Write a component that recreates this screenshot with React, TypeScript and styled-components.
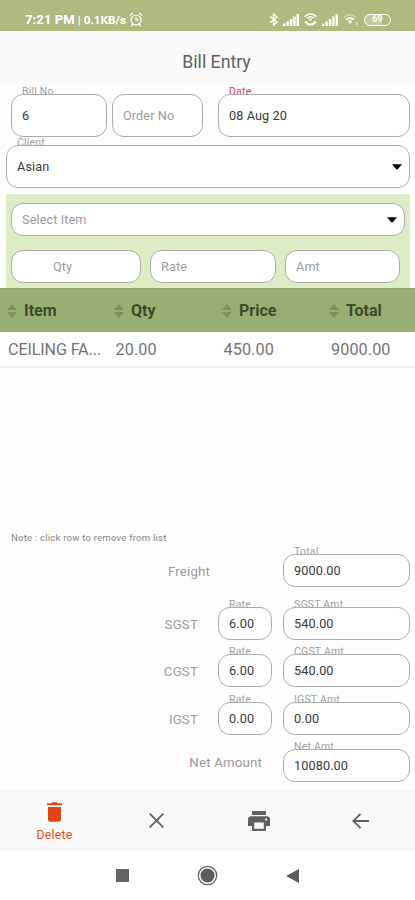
import React from "react";
import styled, { createGlobalStyle } from "styled-components";

const GlobalStyle = createGlobalStyle`
  * { box-sizing: border-box; }
  body { margin: 0; background: #fdfdfd; font-family: Roboto, "Liberation Sans", sans-serif; }
`;

const Screen = styled.main`
  width: 415px;
  height: 900px;
  display: flex;
  flex-direction: column;
  overflow: hidden;
  background: #fdfdfd;
`;

const StatusBar = styled.header`
  height: 31px;
  flex: none;
  display: flex;
  align-items: flex-end;
  justify-content: space-between;
  padding: 0 24px 3px 25px;
  background: #b0b97f;
  color: #fff;
`;

const StatusGroup = styled.div<{ $gap: number }>`
  display: flex;
  align-items: center;
  gap: ${(p) => p.$gap}px;
  height: 17px;
`;

const Clock = styled.span`
  font-size: 13px;
  font-weight: 700;
  letter-spacing: 0.1px;
  white-space: pre;
`;

const NetSpeed = styled.span`
  font-size: 11.8px;
  font-weight: 700;
  white-space: pre;
`;

const TitleBar = styled.div`
  height: 54px;
  flex: none;
  display: flex;
  align-items: center;
  justify-content: center;
  padding: 7px 0 0 18px;
  background: #fafafa;
  color: #606060;
  font-size: 17.7px;
`;

const FieldRow = styled.div<{ $top: number; $left: number }>`
  display: flex;
  flex: none;
  margin-top: ${(p) => p.$top}px;
  padding-left: ${(p) => p.$left}px;
`;

const FieldWrap = styled.div<{ $w: number; $h: number; $ml?: number }>`
  position: relative;
  z-index: 0;
  flex: none;
  width: ${(p) => p.$w}px;
  height: ${(p) => p.$h}px;
  margin-left: ${(p) => p.$ml ?? 0}px;
`;

const FloatLabel = styled.span<{ $accent?: boolean }>`
  position: absolute;
  z-index: -1;
  left: 11px;
  top: -9.5px;
  font-size: 10.5px;
  line-height: 13px;
  letter-spacing: 0.2px;
  white-space: nowrap;
  color: ${(p) => (p.$accent ? "#df3566" : "#a0a0a0")};
`;

const FieldBox = styled.div<{ $hint?: boolean; $pl: number }>`
  display: flex;
  align-items: center;
  justify-content: space-between;
  height: 100%;
  padding: 0 7px 0 ${(p) => p.$pl}px;
  border: 1px solid #acacac;
  border-radius: 12px;
  background: #fff;
  font-size: 12.7px;
  letter-spacing: 0.1px;
  white-space: nowrap;
  color: ${(p) => (p.$hint ? "#9b9b9b" : "#383838")};
`;

const ItemPanel = styled.section`
  width: 404px;
  height: 94px;
  flex: none;
  margin: 6px 0 0 6px;
  overflow: hidden;
  background: #ddecc5;
`;

const TableHead = styled.div`
  height: 44px;
  flex: none;
  display: grid;
  grid-template-columns: 107px 108px 107px 93px;
  align-items: center;
  padding: 0 0 0 7px;
  background: #99ae73;
  border-top: 1px solid #91a66b;
`;

const HeadCell = styled.div`
  display: flex;
  align-items: center;
  gap: 7px;
  font-size: 16px;
  font-weight: 700;
  color: #3d4a2c;
`;

const TableRow = styled.div`
  height: 36px;
  flex: none;
  display: grid;
  grid-template-columns: 107.5px 108px 107.5px 85px;
  align-items: center;
  padding-left: 8px;
  background: #fff;
  border-bottom: 2px solid #ececec;
  font-size: 16.2px;
  color: #747474;
`;

const Cell = styled.span<{ $tight?: boolean }>`
  letter-spacing: ${(p) => (p.$tight ? "-0.15px" : "0.1px")};
  white-space: nowrap;
`;

const Note = styled.p`
  flex: none;
  margin: 163px 0 0 11px;
  height: 14px;
  font-size: 9.6px;
  line-height: 14px;
  letter-spacing: 0.2px;
  color: #858585;
`;

const TotalRow = styled.div<{ $gap: number }>`
  display: flex;
  flex: none;
  align-items: center;
  justify-content: flex-end;
  height: 33px;
  margin-top: ${(p) => p.$gap}px;
  padding-right: 5px;
`;

const TotalName = styled.span<{ $mr: number; $raised?: boolean }>`
  margin-right: ${(p) => p.$mr}px;
  padding: ${(p) => (p.$raised ? "0 0 6px" : "2px 0 0")};
  font-size: 13.3px;
  letter-spacing: 0.15px;
  color: #9b9b9b;
`;

const Toolbar = styled.nav`
  height: 61px;
  flex: none;
  margin-top: 8px;
  display: grid;
  grid-template-columns: 109px 95px 109px 94px;
  align-items: center;
  background: #f8f8f8;
  color: #606060;
`;

const Tool = styled.div<{ $active?: boolean }>`
  display: flex;
  flex-direction: column;
  align-items: center;
  gap: 6px;
  padding-top: ${(p) => (p.$active ? 3 : 0)}px;
  font-size: 12.2px;
  line-height: 14px;
  letter-spacing: 0.3px;
  color: ${(p) => (p.$active ? "#e54d1b" : "#606060")};
`;

const SystemNav = styled.nav`
  height: 49px;
  flex: none;
  display: flex;
  align-items: center;
  justify-content: center;
  gap: 68px;
  background: #fff;
`;

const Svg = styled.svg`
  display: block;
  flex: none;
`;

const Alarm = () => (
  <Svg width="14" height="15" viewBox="0 0 14 15" fill="none" stroke="#fff" strokeWidth="1.2" strokeLinecap="round">
    <circle cx="7" cy="8" r="5" />
    <path d="M7 5.5V8.2H9M1 3.2 3.6 1.2M13 3.2 10.4 1.2M3.6 12.2 2.5 13.6M10.4 12.2l1.1 1.4" />
  </Svg>
);

const Bluetooth = () => (
  <Svg width="9" height="13" viewBox="0 0 9 13" fill="none" stroke="#fff" strokeWidth="1.3">
    <path d="M1 3.5 8 9 4.5 12V1L8 4 1 9.5" />
  </Svg>
);

const Signal = () => (
  <Svg width="16" height="12" viewBox="0 0 16 12" fill="#fff">
    <path d="M0 9.5h2.4V12H0zM3.4 7.5h2.4V12H3.4zM6.8 5h2.4v7H6.8zM10.2 2.5h2.4V12h-2.4zM13.6 0H16v12h-2.4z" />
  </Svg>
);

const WifiCall = () => (
  <Svg width="13" height="13" viewBox="0 0 13 13" fill="none" stroke="#fff" strokeWidth="1.4">
    <path d="M.7 3.6Q6.5-1.5 12.3 3.6M2.8 5.3Q6.5 2.2 10.2 5.3" />
    <path d="M4.5 6.1Q6.5 4.7 8.5 6.1L6.5 8z" fill="#fff" stroke="none" />
    <path d="M1.3 8.5Q6.5 14.8 11.7 8.5" strokeWidth="2" />
  </Svg>
);

const Wifi = () => (
  <Svg width="16" height="13" viewBox="0 0 16 13" fill="none" stroke="#fff">
    <path d="M1 4.4Q7-1 13 4.4" strokeWidth="1" opacity=".65" />
    <path d="M3 6.7Q7 3.1 11 6.7" strokeWidth="1.5" />
    <path d="M4.8 8.2Q7 6.5 9.2 8.2L7 11z" fill="#fff" stroke="none" />
    <path d="M13.8 9.3v3" strokeWidth="1.4" opacity=".7" />
  </Svg>
);

const BatteryShell = styled.div`
  width: 27px;
  height: 12px;
  display: flex;
  align-items: center;
  justify-content: center;
  border: 1.5px solid #fff;
  border-radius: 6px;
  font-size: 9px;
  font-weight: 700;
  line-height: 9px;
  background: linear-gradient(90deg, #c3ca9d 0 66%, transparent 66%);
`;

const Caret = () => (
  <Svg width="10" height="6" viewBox="0 0 10 6">
    <path d="M0 0.3H10L6.2 4.8Q5 6 3.8 4.8Z" fill="#050505" />
  </Svg>
);

const Sorter = () => (
  <Svg width="10" height="14" viewBox="0 0 10 14" fill="#7c915c">
    <path d="M0 6 5 0l5 6zM0 8h10l-5 6z" />
  </Svg>
);

type FieldProps = {
  text: string;
  w: number;
  h?: number;
  ml?: number;
  label?: string;
  hint?: boolean;
  accent?: boolean;
  pl?: number;
  menu?: boolean;
};

const Field = ({ text, w, h = 33, ml, label, hint, accent, pl = 10, menu }: FieldProps) => (
  <FieldWrap $w={w} $h={h} $ml={ml}>
    {label && <FloatLabel $accent={accent}>{label}</FloatLabel>}
    <FieldBox $hint={hint} $pl={pl}>
      {text}
      {menu && <Caret />}
    </FieldBox>
  </FieldWrap>
);

const taxes = [
  { name: "SGST", rate: "6.00", amount: "540.00", gap: 20 },
  { name: "CGST", rate: "6.00", amount: "540.00", gap: 14 },
  { name: "IGST", rate: "0.00", amount: "0.00", gap: 15 },
];

export default function App() {
  return (
    <Screen>
      <GlobalStyle />
      <StatusBar>
        <StatusGroup $gap={3}>
          <Clock>7:21 PM</Clock>
          <NetSpeed>| 0.1KB/s</NetSpeed>
          <Alarm />
        </StatusGroup>
        <StatusGroup $gap={5}>
          <Bluetooth />
          <Signal />
          <WifiCall />
          <Signal />
          <Wifi />
          <BatteryShell>69</BatteryShell>
        </StatusGroup>
      </StatusBar>
      <TitleBar>Bill Entry</TitleBar>

      <FieldRow $top={9} $left={11}>
        <Field label="Bill No" text="6" w={96} h={43} />
        <Field text="Order No" hint w={91} h={43} ml={5} />
        <Field label="Date" accent text="08 Aug 20" w={192} h={43} ml={15} />
      </FieldRow>
      <FieldRow $top={8} $left={6}>
        <Field label="Client" text="Asian" w={404} h={43} menu />
      </FieldRow>

      <ItemPanel>
        <FieldRow $top={9} $left={5}>
          <Field text="Select Item" hint w={394} menu />
        </FieldRow>
        <FieldRow $top={14} $left={5}>
          <Field text="Qty" hint w={130} pl={41} />
          <Field text="Rate" hint w={126} ml={9} />
          <Field text="Amt" hint w={115} ml={9} />
        </FieldRow>
      </ItemPanel>

      <TableHead>
        {["Item", "Qty", "Price", "Total"].map((name) => (
          <HeadCell key={name}>
            <Sorter />
            {name}
          </HeadCell>
        ))}
      </TableHead>
      <TableRow>
        <Cell $tight>CEILING FA...</Cell>
        <Cell>20.00</Cell>
        <Cell>450.00</Cell>
        <Cell>9000.00</Cell>
      </TableRow>

      <Note>Note : click row to remove from list</Note>

      <TotalRow $gap={9}>
        <TotalName $mr={73}>Freight</TotalName>
        <Field label="Total" text="9000.00" w={127} />
      </TotalRow>
      {taxes.map((tax) => (
        <TotalRow key={tax.name} $gap={tax.gap}>
          <TotalName $mr={20}>{tax.name}</TotalName>
          <Field label="Rate" text={tax.rate} w={54} />
          <Field label={`${tax.name} Amt`} text={tax.amount} w={127} ml={11} />
        </TotalRow>
      ))}
      <TotalRow $gap={14}>
        <TotalName $mr={21} $raised>Net Amount</TotalName>
        <Field label="Net Amt" text="10080.00" w={127} />
      </TotalRow>

      <Toolbar>
        <Tool $active>
          <Svg width="15" height="20" viewBox="0 0 15 20" fill="#e54310">
            <path d="M0 1.3h4.2L5.2.3h4.6l1 1H15v2H0zM1 5h13v12.5a2.2 2.2 0 0 1-2.2 2.2H3.2A2.2 2.2 0 0 1 1 17.5z" />
          </Svg>
          Delete
        </Tool>
        <Tool>
          <Svg width="15" height="15" viewBox="0 0 15 15" stroke="#606060" strokeWidth="1.7">
            <path d="M.7.7l13.6 13.6M14.3.7.7 14.3" />
          </Svg>
        </Tool>
        <Tool>
          <Svg width="22" height="20" viewBox="0 0 22 20" fill="#606060">
            <path fillRule="evenodd" d="M4 0h14v4H4zM3.2 5.3h15.6A3.2 3.2 0 0 1 22 8.5V15h-4v5H4v-5H0V8.5a3.2 3.2 0 0 1 3.2-3.2zM6.2 11.5v6.2h9.6v-6.2zM18 7.4a1.1 1.1 0 1 0 0 2.2 1.1 1.1 0 0 0 0-2.2z" />
          </Svg>
        </Tool>
        <Tool>
          <Svg width="17" height="16" viewBox="0 0 17 16" fill="none" stroke="#606060" strokeWidth="1.8">
            <path d="M17 8H1.5M8.5.8 1.3 8l7.2 7.2" />
          </Svg>
        </Tool>
      </Toolbar>
      <SystemNav>
        <Svg width="13" height="13" viewBox="0 0 13 13">
          <path d="M0 0h13v13H0z" fill="#646464" />
        </Svg>
        <Svg width="21" height="21" viewBox="0 0 21 21">
          <circle cx="10.5" cy="10.5" r="9.2" fill="none" stroke="#606060" strokeWidth="1.3" />
          <circle cx="10.5" cy="10.5" r="7" fill="#5c5c5c" />
        </Svg>
        <Svg width="13" height="14" viewBox="0 0 13 14">
          <path d="M13 0v14L0 7z" fill="#5c5c5c" />
        </Svg>
      </SystemNav>
    </Screen>
  );
}
